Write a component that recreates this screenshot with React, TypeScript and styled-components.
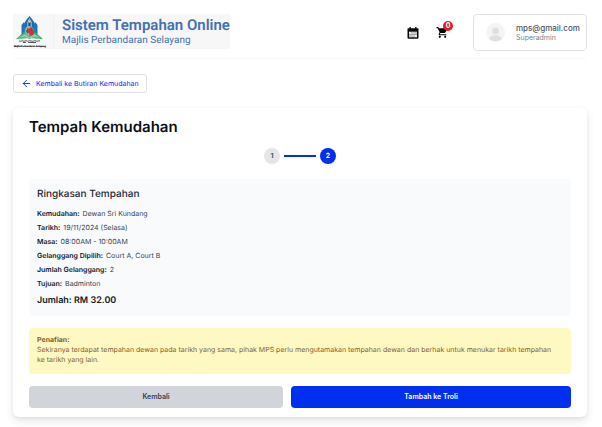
import React from "react";
import styled, { createGlobalStyle } from "styled-components";
import { MdShoppingCart } from "react-icons/md";
import { ArrowLeft } from "lucide-react";

const GlobalStyle = createGlobalStyle`
  *, *::before, *::after { box-sizing: border-box; }
  body {
    margin: 0;
    background: #fff;
    color: #1f2937;
    font-family: Inter, "Liberation Sans", sans-serif;
    font-size: 7px;
    line-height: 10px;
    text-rendering: geometricPrecision;
  }
  button { font: inherit; cursor: pointer; }
`;

const Page = styled.div`
  padding: 14px 15px 10px 13px;
`;

const Header = styled.header`
  display: flex;
  justify-content: space-between;
  align-items: flex-start;
  height: 45px;
  border-bottom: 1px solid #f8f8f9;
  border-radius: 4px;
`;

const Brand = styled.a`
  display: flex;
  align-items: center;
  height: 35px;
  background: #f7f7f7;
  color: #4371b5;
  text-decoration: none;
`;

const CrestFrame = styled.span`
  display: flex;
  flex: none;
  width: 41px;
  height: 35px;
  border-right: 1px solid #f0f0f0;
`;

const BrandText = styled.span`
  display: flex;
  flex-direction: column;
  padding-left: 8px;
  font-family: Roboto, "Liberation Sans", sans-serif;
  white-space: nowrap;
`;

const BrandTitle = styled.span`
  font-size: 15px;
  line-height: 17px;
  font-weight: 600;
`;

const BrandSubtitle = styled.span`
  font-size: 10px;
  line-height: 13px;
`;

const HeaderActions = styled.div`
  display: flex;
  align-items: center;
  height: 37px;
`;

const IconButton = styled.button<{ $gap: number }>`
  position: relative;
  display: flex;
  padding: 0;
  border: 0;
  background: none;
  color: #050505;
  margin-right: ${(p) => p.$gap}px;
`;

const Badge = styled.span`
  position: absolute;
  top: -5px;
  right: -4px;
  width: 10px;
  height: 10px;
  border-radius: 50%;
  background: #dc1e24;
  color: #fff;
  font-size: 7px;
  line-height: 10px;
  font-weight: 700;
  text-align: center;
`;

const UserCard = styled.button`
  display: flex;
  align-items: center;
  gap: 11px;
  width: 114px;
  height: 37px;
  padding: 0 6px 0 12px;
  border: 1px solid #e0e2e6;
  border-radius: 4px;
  background: #fff;
  text-align: left;
`;

const UserText = styled.span`
  display: flex;
  flex-direction: column;
`;

const UserMail = styled.span`
  color: #4b5563;
  font-size: 8px;
  font-weight: 500;
`;

const UserRole = styled.span`
  color: #7b838f;
`;

const BackLink = styled.a`
  display: inline-flex;
  align-items: center;
  gap: 4px;
  height: 19px;
  margin-top: 15px;
  padding: 0 7px;
  border: 1px solid #dfe1e6;
  border-radius: 3px;
  color: #0a2cec;
  text-decoration: none;
  vertical-align: top;
`;

const Card = styled.main`
  margin-top: 15px;
  padding: 10px 16px 9px;
  border-radius: 6px;
  background: #fff;
  box-shadow: 0 4px 8px rgba(0, 0, 0, 0.1), 0 1px 3px rgba(0, 0, 0, 0.06);
`;

const Title = styled.h1`
  margin: 0;
  color: #0b0f19;
  font-size: 15px;
  line-height: 18px;
  font-weight: 600;
`;

const Steps = styled.ol`
  display: flex;
  align-items: center;
  justify-content: center;
  margin: 12px 0 15px;
  padding: 0;
  list-style: none;
`;

const Step = styled.li<{ $active?: boolean }>`
  display: flex;
  align-items: center;
  justify-content: center;
  width: 16px;
  height: 16px;
  border-radius: 50%;
  background: ${(p) => (p.$active ? "#0030ee" : "#e5e6ea")};
  color: ${(p) => (p.$active ? "#fff" : "#4b5563")};
  font-weight: 700;
`;

const StepLine = styled.li`
  width: 32px;
  height: 2px;
  margin: 0 4px;
  background: #0030ee;
`;

const Summary = styled.section`
  padding: 8px 8px 9px;
  border-radius: 4px;
  background: #f9fafb;
`;

const SummaryTitle = styled.h2`
  margin: 0 0 8px;
  font-size: 10px;
  line-height: 14px;
  font-weight: 500;
`;

const Details = styled.dl`
  display: grid;
  row-gap: 4px;
  margin: 0;
`;

const Detail = styled.div`
  display: flex;
  gap: 3px;
  dt { font-weight: 600; color: #111827; }
  dd { margin: 0; color: #374151; }
`;

const Total = styled.p`
  margin: 5px 0 0;
  color: #111827;
  font-size: 9px;
  line-height: 13px;
  font-weight: 600;
`;

const Notice = styled.section`
  margin-top: 12px;
  padding: 7px 12px 8px 8px;
  min-height: 46px;
  border-radius: 4px;
  background: #fef9c3;
  color: #85602b;
  p { margin: 0; }
  strong { font-weight: 700; }
`;

const Actions = styled.div`
  display: grid;
  grid-template-columns: 254fr 280fr;
  gap: 8px;
  margin-top: 12px;
`;

const ActionButton = styled.button<{ $primary?: boolean }>`
  height: 22px;
  padding: 0;
  border: 0;
  border-radius: 4px;
  background: ${(p) => (p.$primary ? "#0030ee" : "#d1d5db")};
  color: ${(p) => (p.$primary ? "#fff" : "#374151")};
  font-weight: 600;
`;

const Crest = () => (
  <svg width="36" height="35" viewBox="0 0 36 35" aria-hidden="true">
    <path d="M8.500 11l2.500-3 2 3v12H8.500zM20 11l2-3 2.500 3v12H20z" fill="#1976b8" />
    <path d="M12 22V8l2-3 2.500-3L19 5l2 3v14l-4.500 3z" fill="#146eb4" />
    <path d="M14.500 17V8l2-4 2 4v9z" fill="#dceafa" />
    <path d="M15.300 16V8l1.200-3 1.200 3v8z" fill="#154783" />
    <circle cx="16.500" cy="7.500" r="1.200" fill="#f1d95c" />
    <path d="M3 25l8-7 5.500 3 5.500-3 8 7-13.500-1z" fill="#36ad70" />
    <path d="M5 24l6.500-4 5 3v1.500c-4-1.500-8-1.500-11.500-.5zM28 24l-6.500-4-5 3v1.500c4-1.500 8-1.500 11.500-.5z" fill="#81d1a2" />
    <path d="M12.500 14c3-4 8-1 9 3 0 3-2 5-5 5-4 0-6-4-4-8z" fill="#a5a6a5" />
    <path d="M14 14l2 1 2-2 2 3 2 1-2 4-3 1-1-3-2-1z" fill="#c93342" />
    <path d="M12.500 16l3 1-1 3zM18 13l3 3-3 1z" fill="#386c55" />
    <path d="M6 27c2 1 3-1 4 0s3-1 4 0 2-1 4 0 3-1 5 0 2-1 4 0M10 28.500h3m2 0h8" fill="none" stroke="#303332" strokeWidth=".8" />
    <text x="17" y="33" textAnchor="middle" fontFamily="Liberation Sans, sans-serif" fontSize="2.3" fontWeight="700" fill="#111" stroke="#111" strokeWidth=".15">Majlis Perbandaran Selayang</text>
  </svg>
);

const CalendarIcon = () => (
  <svg width="12" height="12" viewBox="0 0 12 12" aria-hidden="true">
    <path d="M2.500 0h1.300v1.300h4.400V0h1.300v1.300H11q.5 0 .5.500v9q0 1-1 1h-9q-1 0-1-1v-9q0-.5.5-.5h1.500z" fill="#090909" />
    <path d="M2 4.700h8v5.600H2z" fill="#ededed" />
    <path d="M4.500 5.900h1m1 0h1m1 0h1M2.500 7.500h1m1 0h1m1 0h1m1 0h1M2.500 9.100h1m1 0h1m1 0h1" stroke="#333" strokeWidth=".8" />
  </svg>
);

const Avatar = () => (
  <svg width="19" height="19" viewBox="0 0 19 19" aria-hidden="true">
    <circle cx="9.500" cy="9.500" r="9.500" fill="#f4f4f5" />
    <circle cx="9.500" cy="8" r="3.300" fill="#dedfe1" />
    <path d="M3.500 16c0-5 12-5 12 0-3 3-9 3-12 0z" fill="#dedfe1" />
  </svg>
);

const details = [
  ["Kemudahan:", "Dewan Sri Kundang"],
  ["Tarikh:", "19/11/2024 (Selasa)"],
  ["Masa:", "08:00AM - 10:00AM"],
  ["Gelanggang Dipilih:", "Court A, Court B"],
  ["Jumlah Gelanggang:", "2"],
  ["Tujuan:", "Badminton"],
];

export default function App() {
  return (
    <>
      <GlobalStyle />
      <Page>
        <Header>
          <Brand href="#">
            <CrestFrame><Crest /></CrestFrame>
            <BrandText>
              <BrandTitle>Sistem Tempahan Online</BrandTitle>
              <BrandSubtitle>Majlis Perbandaran Selayang</BrandSubtitle>
            </BrandText>
          </Brand>
          <HeaderActions>
            <IconButton $gap={17} aria-label="Kalendar"><CalendarIcon /></IconButton>
            <IconButton $gap={24} aria-label="Troli">
              <MdShoppingCart size={13} />
              <Badge>0</Badge>
            </IconButton>
            <UserCard>
              <Avatar />
              <UserText>
                <UserMail>mps@gmail.com</UserMail>
                <UserRole>Superadmin</UserRole>
              </UserText>
            </UserCard>
          </HeaderActions>
        </Header>
        <BackLink href="#">
          <ArrowLeft size={11} strokeWidth={2} />
          Kembali ke Butiran Kemudahan
        </BackLink>
        <Card>
          <Title>Tempah Kemudahan</Title>
          <Steps>
            <Step>1</Step>
            <StepLine aria-hidden="true" />
            <Step $active aria-current="step">2</Step>
          </Steps>
          <Summary>
            <SummaryTitle>Ringkasan Tempahan</SummaryTitle>
            <Details>
              {details.map(([label, value]) => (
                <Detail key={label}>
                  <dt>{label}</dt>
                  <dd>{value}</dd>
                </Detail>
              ))}
            </Details>
            <Total>Jumlah: RM 32.00</Total>
          </Summary>
          <Notice>
            <strong>Penafian:</strong>
            <p>Sekiranya terdapat tempahan dewan pada tarikh yang sama, pihak MPS perlu mengutamakan tempahan dewan dan berhak untuk menukar tarikh tempahan ke tarikh yang lain.</p>
          </Notice>
          <Actions>
            <ActionButton>Kembali</ActionButton>
            <ActionButton $primary>Tambah ke Troli</ActionButton>
          </Actions>
        </Card>
      </Page>
    </>
  );
}
